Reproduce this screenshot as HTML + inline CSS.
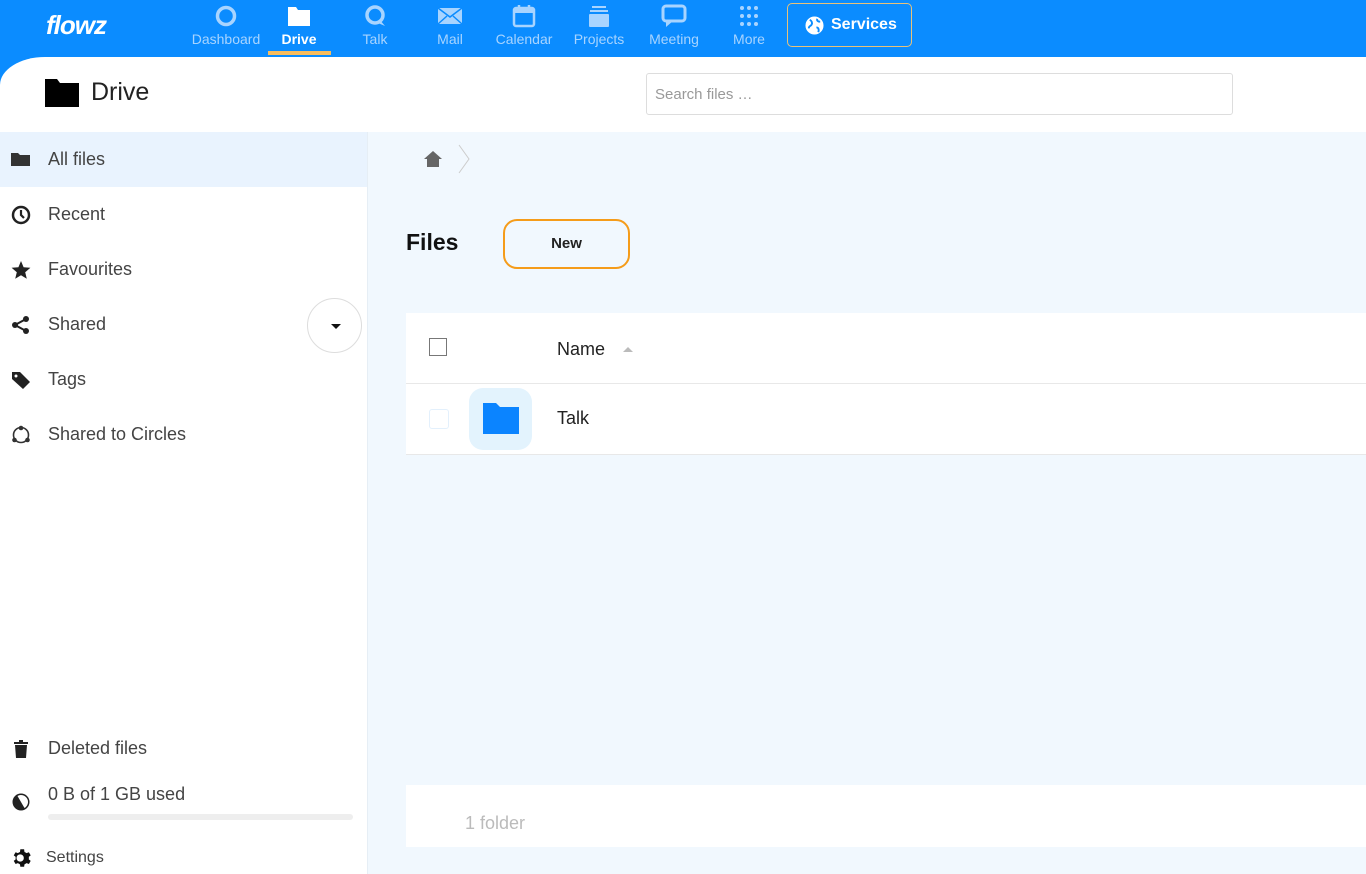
<!DOCTYPE html>
<html><head><meta charset="utf-8"><style>
*{box-sizing:border-box;margin:0;padding:0}
html,body{width:1366px;height:874px;overflow:hidden}
body{font-family:"Liberation Sans",sans-serif;background:#0b8cff;position:relative}
.nav{position:absolute;top:0;left:0;width:1366px;height:57px;background:#0b8cff}
.logo{position:absolute;left:46px;top:10px;color:#fff;font-weight:bold;font-size:26px;font-style:italic;letter-spacing:-1px}
.ni{position:absolute;top:4px;width:70px;text-align:center;color:#a8d4ff;font-size:14px}
.ni svg{display:block;margin:0 auto 3px;height:24px}
.ni.act{color:#fff;font-weight:bold}
.bar{position:absolute;left:268px;top:51px;width:63px;height:4px;background:#f7bd5e}
.svc{position:absolute;left:787px;top:3px;width:125px;height:44px;border:1px solid #e8c27a;border-radius:5px;color:#fff;font-weight:bold;font-size:16px;line-height:42px;padding-left:43px}
.svc svg{position:absolute;left:17px;top:12px}
.main{position:absolute;top:57px;left:0;width:1366px;height:817px;background:#fff;border-top-left-radius:45px 28px;overflow:hidden}
.title{position:absolute;left:45px;top:20px;font-size:25px;color:#222;display:flex;align-items:center}
.search{position:absolute;left:646px;top:16px;width:587px;height:42px;border:1px solid #ddd;border-radius:3px;font-size:15px;color:#999;padding:12px 8px}
.side{position:absolute;left:0;top:75px;width:368px;height:742px;border-right:1px solid #e6eef5;background:#fff;overflow:hidden}
.it{position:absolute;left:0;width:367px;height:55px;font-size:18px;color:#444;padding-left:48px;line-height:55px}
.it svg{position:absolute;left:11px;top:18px}
.content{position:absolute;left:368px;top:75px;width:998px;height:742px;background:#f1f8fe}
</style></head><body>
<div class="nav">
<div class="logo">flowz</div>
<div class="ni" style="left:191px"><svg width="24" viewBox="0 0 24 24"><circle cx="12" cy="12" r="8.5" fill="none" stroke="#a8d4ff" stroke-width="3.5"/></svg>Dashboard</div>
<div class="ni act" style="left:264px"><svg width="24" viewBox="0 0 24 24"><path d="M1 3h8l2 3h12v16H1z" fill="#fff"/></svg>Drive</div>
<div class="ni" style="left:340px"><svg width="24" viewBox="0 0 24 24"><circle cx="12" cy="11" r="8" fill="none" stroke="#a8d4ff" stroke-width="3.5"/><path d="M17 16l5 6-7-3z" fill="#a8d4ff"/></svg>Talk</div>
<div class="ni" style="left:415px"><svg width="26" viewBox="0 0 26 24"><rect x="1" y="4" width="24" height="16" fill="#a8d4ff"/><path d="M1 4l12 9 12-9M1 20l9-8M25 20l-9-8" stroke="#0b8cff" stroke-width="1.5" fill="none"/></svg>Mail</div>
<div class="ni" style="left:489px"><svg width="24" viewBox="0 0 24 24"><rect x="2" y="4" width="20" height="18" rx="2" fill="none" stroke="#a8d4ff" stroke-width="2.5"/><rect x="2" y="4" width="20" height="5" fill="#a8d4ff"/><path d="M7 1v6M17 1v6" stroke="#a8d4ff" stroke-width="2.5"/></svg>Calendar</div>
<div class="ni" style="left:564px"><svg width="24" viewBox="0 0 24 24"><rect x="2" y="10" width="20" height="13" rx="1" fill="#a8d4ff"/><rect x="3" y="6" width="18" height="2" fill="#a8d4ff"/><rect x="5" y="2" width="14" height="2" fill="#a8d4ff"/></svg>Projects</div>
<div class="ni" style="left:639px"><svg width="26" viewBox="0 0 26 24"><rect x="2" y="2" width="22" height="15" rx="3" fill="none" stroke="#a8d4ff" stroke-width="3"/><path d="M5 17l0 6 7-6z" fill="#a8d4ff"/></svg>Meeting</div>
<div class="ni" style="left:714px"><svg width="24" viewBox="0 0 24 24" fill="#a8d4ff"><circle cx="5" cy="4" r="2"/><circle cx="12" cy="4" r="2"/><circle cx="19" cy="4" r="2"/><circle cx="5" cy="12" r="2"/><circle cx="12" cy="12" r="2"/><circle cx="19" cy="12" r="2"/><circle cx="5" cy="20" r="2"/><circle cx="12" cy="20" r="2"/><circle cx="19" cy="20" r="2"/></svg>More</div>
<div class="bar"></div>
<div class="svc"><svg width="19" height="19" viewBox="0 0 20 20"><circle cx="10" cy="10" r="9.5" fill="#fff"/><path d="M5 4c2 1 3 3 2 5s-3 1-3 4M13 3c-1 2 1 3 3 3M12 12c2 0 3 2 2 5" stroke="#0b8cff" stroke-width="2" fill="none"/></svg>Services</div>
</div>
<div class="main">
<div class="title"><svg width="34" height="30" viewBox="0 0 34 30"><path d="M0 2h12l3 4h19v24H0z" fill="#000"/></svg><span style="margin-left:12px">Drive</span></div>
<div class="search">Search files …</div>
<div class="side">
<div class="it" style="top:0;background:#e9f3fe"><svg width="20" height="18" viewBox="0 0 20 18"><path d="M0 3h7l2 2h10v11H0z" fill="#333"/></svg>All files</div>
<div class="it" style="top:55px"><svg width="20" height="20" viewBox="0 0 20 20"><circle cx="10" cy="10" r="8" fill="none" stroke="#222" stroke-width="2.5"/><path d="M10 5v5l3 3" stroke="#222" stroke-width="2.2" fill="none"/></svg>Recent</div>
<div class="it" style="top:110px"><svg width="20" height="20" viewBox="0 0 20 20"><path d="M10 1l2.6 6.3 6.8.5-5.2 4.4 1.6 6.6L10 15.3 4.2 18.8l1.6-6.6L.6 7.8l6.8-.5z" fill="#222"/></svg>Favourites</div>
<div class="it" style="top:165px"><svg width="20" height="20" viewBox="0 0 20 20"><circle cx="15" cy="4" r="3" fill="#222"/><circle cx="4" cy="10" r="3" fill="#222"/><circle cx="15" cy="16" r="3" fill="#222"/><path d="M15 4L4 10l11 6" stroke="#222" stroke-width="2" fill="none"/></svg>Shared</div>
<div style="position:absolute;left:307px;top:166px;width:55px;height:55px;border:1px solid #ddd;border-radius:50%;background:#fff"><div style="position:absolute;left:23px;top:25px;border-left:5px solid transparent;border-right:5px solid transparent;border-top:5px solid #111"></div></div>
<div class="it" style="top:220px"><svg width="20" height="20" viewBox="0 0 20 20"><path d="M1 2h8l10 10-7 7L1 9z" fill="#222"/><circle cx="5" cy="6" r="1.5" fill="#fff"/></svg>Tags</div>
<div class="it" style="top:275px"><svg width="20" height="20" viewBox="0 0 20 20"><circle cx="10" cy="10" r="7.5" fill="none" stroke="#333" stroke-width="1.6"/><circle cx="10" cy="3" r="2.3" fill="#333"/><circle cx="3.5" cy="15" r="2.3" fill="#333"/><circle cx="16.5" cy="15" r="2.3" fill="#333"/></svg>Shared to Circles</div>
<div class="it" style="top:589px"><svg width="20" height="20" viewBox="0 0 20 20"><path d="M3 3h14v2H3zM8 1h4v2H8zM4 6h12l-1 13H5z" fill="#222"/></svg>Deleted files</div>
<div class="it" style="top:635px"><svg width="20" height="20" viewBox="0 0 20 20" style="top:25px"><circle cx="10" cy="10" r="8.5" fill="#222"/><path d="M10 3a7 7 0 0 1 0 14z" fill="#fff" transform="rotate(-30 10 10)"/></svg>0 B of 1 GB used</div>
<div style="position:absolute;left:48px;top:682px;width:305px;height:6px;border-radius:3px;background:#eee"></div>
<div class="it" style="top:706px;font-size:16px;padding-left:46px;height:40px;line-height:40px"><svg width="22" height="22" viewBox="0 0 24 24" style="top:9px"><path d="M12 8a4 4 0 1 0 0 8 4 4 0 0 0 0-8zm9.4 5.5l2.1 1.6-2 3.5-2.5-1a8 8 0 0 1-2.3 1.3L16.3 21.5h-4.1l-.4-2.6a8 8 0 0 1-2.3-1.3l-2.5 1-2-3.5 2.1-1.6a8 8 0 0 1 0-2.7L5 9.2l2-3.5 2.5 1A8 8 0 0 1 11.8 5.4L12.2 2.5h4.1l.4 2.9a8 8 0 0 1 2.3 1.3l2.5-1 2 3.5-2.1 1.6a8 8 0 0 1 0 2.7z" fill="#111" transform="translate(-2 0)"/></svg>Settings</div>
</div>
<div class="content">
<svg style="position:absolute;left:56px;top:19px" width="18" height="16" viewBox="0 0 18 16"><path d="M9 0l9 8h-3v8H3V8H0z" fill="#666"/></svg>
<svg style="position:absolute;left:90px;top:12px" width="12" height="30" viewBox="0 0 12 30"><path d="M1 1l10 14L1 29" stroke="#ccc" fill="none"/></svg>
<div style="position:absolute;left:38px;top:97px;font-size:23px;font-weight:bold;color:#111">Files</div>
<div style="position:absolute;left:135px;top:87px;width:127px;height:50px;border:2px solid #f59c1a;border-radius:14px;text-align:center;line-height:46px;font-weight:bold;font-size:15px;color:#222">New</div>
<div style="position:absolute;left:38px;top:181px;width:960px;height:142px;background:#fff">
<div style="position:absolute;left:23px;top:25px;width:18px;height:18px;border:1px solid #777"></div>
<div style="position:absolute;left:151px;top:26px;font-size:18px;color:#222">Name</div>
<div style="position:absolute;left:217px;top:34px;border-left:5px solid transparent;border-right:5px solid transparent;border-bottom:5px solid #bbb"></div>
<div style="position:absolute;left:0;top:70px;width:960px;height:1px;background:#e8e8e8"></div>
<div style="position:absolute;left:23px;top:96px;width:20px;height:20px;border:1px solid #e3f0fc;border-radius:3px"></div>
<div style="position:absolute;left:63px;top:75px;width:63px;height:62px;background:#e3f3fd;border-radius:14px"><svg style="position:absolute;left:14px;top:15px" width="36" height="31" viewBox="0 0 36 31"><path d="M0 0h13l4 4h19v27H0z" fill="#0b84ff"/></svg></div>
<div style="position:absolute;left:151px;top:95px;font-size:18px;color:#222">Talk</div>
<div style="position:absolute;left:0;top:141px;width:960px;height:1px;background:#e8e8e8"></div>
</div>
<div style="position:absolute;left:38px;top:653px;width:960px;height:62px;background:#fff;font-size:18px;color:#bbb;padding:28px 0 0 59px">1 folder</div>
</div>
</div>
</body></html>
